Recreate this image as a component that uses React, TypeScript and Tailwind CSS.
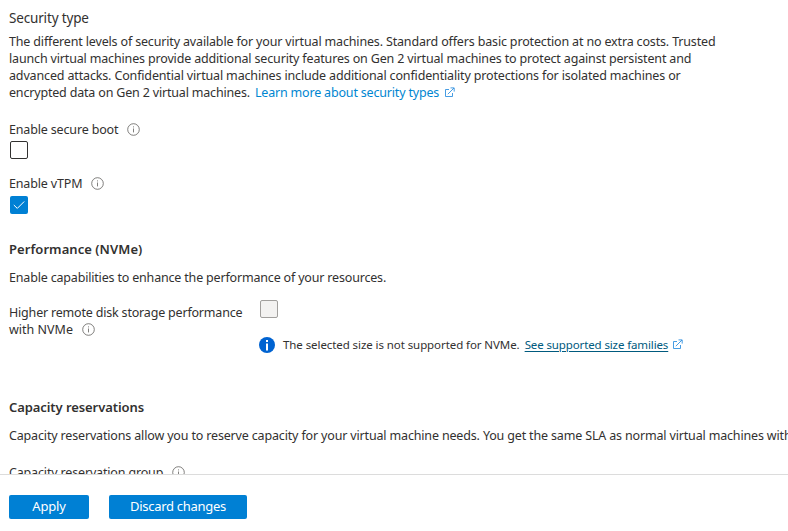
import React from "react";

function InfoIcon() {
  return (
    <svg className="block h-[13px] w-[13px] shrink-0" viewBox="0 0 13 13" fill="none" stroke="#605e5c">
      <circle cx="6.5" cy="6.5" r="5.8" strokeWidth="0.8" />
      <path d="M6.5 5.5V9.4M6.5 3.4V4.4" strokeWidth="0.8" />
    </svg>
  );
}

function ExternalIcon({ className = "" }: { className?: string }) {
  return (
    <svg className={`block h-[11px] w-[11px] shrink-0 ${className}`} viewBox="0 0 11 11" fill="none" stroke="#3292e0" strokeWidth="0.9">
      <path d="M5 2.5H1.5V9.5H8.5V6M3.8 7.2L10 1M6.5 0.9H10.2V4.6" />
    </svg>
  );
}

export default function App() {
  return (
    <div className="flex h-[531px] w-[788px] flex-col overflow-hidden bg-white font-['Noto_Sans','Open_Sans',sans-serif] text-[12.5px] leading-[17px] tracking-[-0.16px] whitespace-nowrap text-[#323130]">
      <main className="h-[474px] shrink-0 overflow-hidden pl-[9px]">
        <h2 className="mt-[9px] text-[13.5px] leading-[18px]">Security type</h2>
        <div className="mt-[6px]">
          <p>The different levels of security available for your virtual machines. Standard offers basic protection at no extra costs. Trusted</p>
          <p>launch virtual machines provide additional security features on Gen 2 virtual machines to protect against persistent and</p>
          <p className="tracking-[-0.15px]">advanced attacks. Confidential virtual machines include additional confidentiality protections for isolated machines or</p>
          <div className="flex items-center tracking-[-0.18px]">
            <span>encrypted data on Gen 2 virtual machines.</span>
            <a className="ml-[5px] text-[#0086d1]">Learn more about security types</a>
            <ExternalIcon className="ml-[5px]" />
          </div>
        </div>
        <div className="mt-5 flex h-[17px] items-center gap-[9px]">
          <span>Enable secure boot</span><InfoIcon />
        </div>
        <div className="mt-[3px] ml-px h-[18px] w-[18px] rounded-[2px] border border-[#323130]" />
        <div className="mt-4 flex h-[17px] items-center gap-[9px]">
          <span>Enable vTPM</span><InfoIcon />
        </div>
        <div className="mt-1 ml-px flex h-[18px] w-[18px] items-center justify-center rounded-[2px] bg-[#0080d4]">
          <svg className="h-3 w-3" viewBox="0 0 12 12" fill="none" stroke="white" strokeWidth="1"><path d="M0.8 6L4.3 9.4L11.2 2.5" /></svg>
        </div>
        <h3 className="mt-[27px] text-[13px] font-semibold tracking-[0.06px]">Performance (NVMe)</h3>
        <p className="mt-[11px] tracking-[-0.18px]">Enable capabilities to enhance the performance of your resources.</p>
        <div className="mt-[14px] flex h-[55px]">
          <div className="w-[250px] pt-1">
            <p className="tracking-[-0.19px]">Higher remote disk storage performance</p>
            <div className="flex items-center gap-[9px]"><span className="tracking-normal">with NVMe</span><InfoIcon /></div>
          </div>
          <div>
            <div className="ml-px h-[18px] w-[18px] rounded-[2px] border border-[#a19f9d] bg-[#f3f2f1]" />
            <div className="mt-[18px] flex h-[18px] items-center text-[11.5px] tracking-[-0.08px]">
              <svg className="h-4 w-4" viewBox="0 0 16 16"><circle cx="8" cy="8" r="8" fill="#0063d1" /><path d="M7 6.5h2V13.5H7zM7 3h2v2H7z" fill="white" /></svg>
              <span className="ml-2 -translate-y-px">The selected size is not supported for NVMe.</span>
              <a className="ml-[5px] -translate-y-px tracking-[-0.12px] text-[#005a7e] underline underline-offset-2">See supported size families</a>
              <ExternalIcon className="ml-1 -translate-y-px" />
            </div>
          </div>
        </div>
        <h3 className="mt-[44px] text-[13px] font-semibold tracking-[-0.08px]">Capacity reservations</h3>
        <p className="mt-[11px]">Capacity reservations allow you to reserve capacity for your virtual machine needs. You get the same SLA as normal virtual machines with</p>
        <div className="mt-5 flex items-center gap-[9px]"><span>Capacity reservation group</span><InfoIcon /></div>
      </main>
      <footer className="flex h-[57px] items-start gap-5 border-t border-[#dcdcdc] bg-white pt-5 pl-[9px] text-white">
        <button className="h-6 w-20 rounded-[2px] bg-[#0080d4] pb-px text-[13px] leading-[23px]">Apply</button>
        <button className="h-6 w-[138px] rounded-[2px] bg-[#0080d4] pb-px text-[13px] leading-[23px] tracking-[-0.28px]">Discard changes</button>
      </footer>
    </div>
  );
}
